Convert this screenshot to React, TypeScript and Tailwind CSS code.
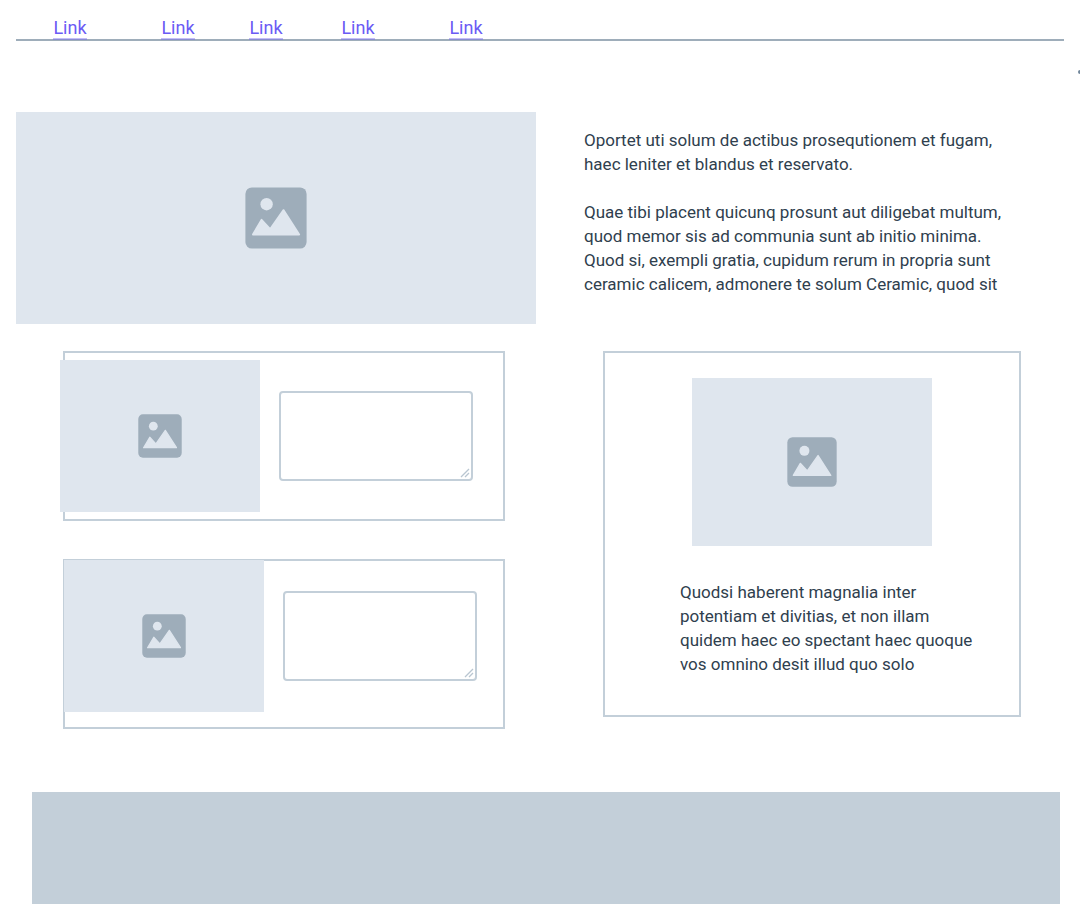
import clsx from "clsx";

const links = [
  { id: "first", space: "" },
  { id: "second", space: "ml-[74px]" },
  { id: "third", space: "ml-[54px]" },
  { id: "fourth", space: "ml-[58px]" },
  { id: "fifth", space: "ml-[74px]" },
];

function Placeholder({ className, iconClass }: { className: string; iconClass: string }) {
  return (
    <div role="img" aria-label="Image" className={clsx("flex items-center justify-center bg-[#dfe6ee]", className)}>
      <svg viewBox="0 0 62 62" className={iconClass} aria-hidden="true">
        <rect x="0.4" y="0.4" width="61.2" height="61.2" rx="6.5" fill="#9eadba" />
        <circle cx="21.6" cy="17.2" r="6.2" fill="#dfe6ee" />
        <path
          d="M7.9 47.5 16.6 32.8 25.2 42.1 38.5 23.1 54.2 47.5Z"
          fill="#dfe6ee"
          stroke="#dfe6ee"
          strokeWidth="1.8"
          strokeLinejoin="round"
        />
      </svg>
    </div>
  );
}

function NoteField({ label, className }: { label: string; className: string }) {
  return (
    <div className={clsx("relative h-[90px] min-w-0 flex-1", className)}>
      <textarea
        aria-label={label}
        className="block h-full w-full resize-none rounded border-2 border-[#c3cfd9] bg-white p-2 text-[17px] text-[#2f404e] outline-none"
      />
      <svg viewBox="0 0 10 10" className="pointer-events-none absolute right-[3px] bottom-[3px] size-2.5" aria-hidden="true">
        <path d="M1 9 9 1M5 9 9 5" stroke="#b9c6d1" strokeWidth="1.3" fill="none" />
      </svg>
    </div>
  );
}

export default function App() {
  return (
    <div className="relative overflow-hidden bg-white pb-5 font-['Roboto',sans-serif] text-[17px] leading-6 text-[#2f404e]">
      <nav className="mx-4 flex h-[41px] items-end border-b-2 border-[#9eadba] pl-[37px]">
        {links.map((link) => (
          <a
            key={link.id}
            href={`#${link.id}`}
            className={clsx("-mb-px h-6 w-[34px] border-b-2 border-[#6c5df0]/40 text-center text-lg leading-6 text-[#6b5bf5]", link.space)}
          >
            Link
          </a>
        ))}
      </nav>
      <span className="absolute top-[70px] -right-0.5 size-1 rounded-full bg-[#71869a]" />

      <main>
        <section className="mx-4 mt-[71px] grid grid-cols-[520fr_480fr] gap-12">
          <Placeholder className="h-[212px]" iconClass="size-[62px]" />
          <div className="flex flex-col gap-6 pt-4 pr-10">
            <p>Oportet uti solum de actibus prosequtionem et fugam, haec leniter et blandus et reservato.</p>
            <p>
              Quae tibi placent quicunq prosunt aut diligebat multum, quod memor sis ad communia sunt ab initio minima.
              <br />
              Quod si, exempli gratia, cupidum rerum in propria sunt ceramic calicem, admonere te solum Ceramic, quod sit
            </p>
          </div>
        </section>

        <section className="mt-[27px] mr-[59px] ml-[63px] grid grid-cols-[442fr_418fr] items-start gap-[98px]">
          <div className="flex flex-col gap-[38px]">
            <article className="flex h-[170px] items-start border-2 border-[#c3cfd9]">
              <Placeholder className="mt-[7px] -ml-[5px] h-[152px] w-[200px] shrink-0" iconClass="size-11" />
              <NoteField label="First note" className="mt-[38px] mr-[30px] ml-[19px]" />
            </article>
            <article className="flex h-[170px] items-start border-2 border-[#c3cfd9]">
              <Placeholder className="-mt-px -ml-px h-[152px] w-[200px] shrink-0" iconClass="size-11" />
              <NoteField label="Second note" className="mt-[30px] mr-[26px] ml-[19px]" />
            </article>
          </div>
          <article className="flex flex-col border-2 border-[#c3cfd9] pt-[25px] pb-[39px]">
            <Placeholder className="h-[168px] w-[240px] self-center" iconClass="size-[50px]" />
            <p className="mt-[34px] pr-[35px] pl-[75px]">
              Quodsi haberent magnalia inter potentiam et divitias, et non illam quidem haec eo spectant haec quoque vos
              omnino desit illud quo solo
            </p>
          </article>
        </section>
      </main>

      <footer className="mt-[63px] mr-5 ml-8 h-28 bg-[#c3cfd9]" />
    </div>
  );
}
